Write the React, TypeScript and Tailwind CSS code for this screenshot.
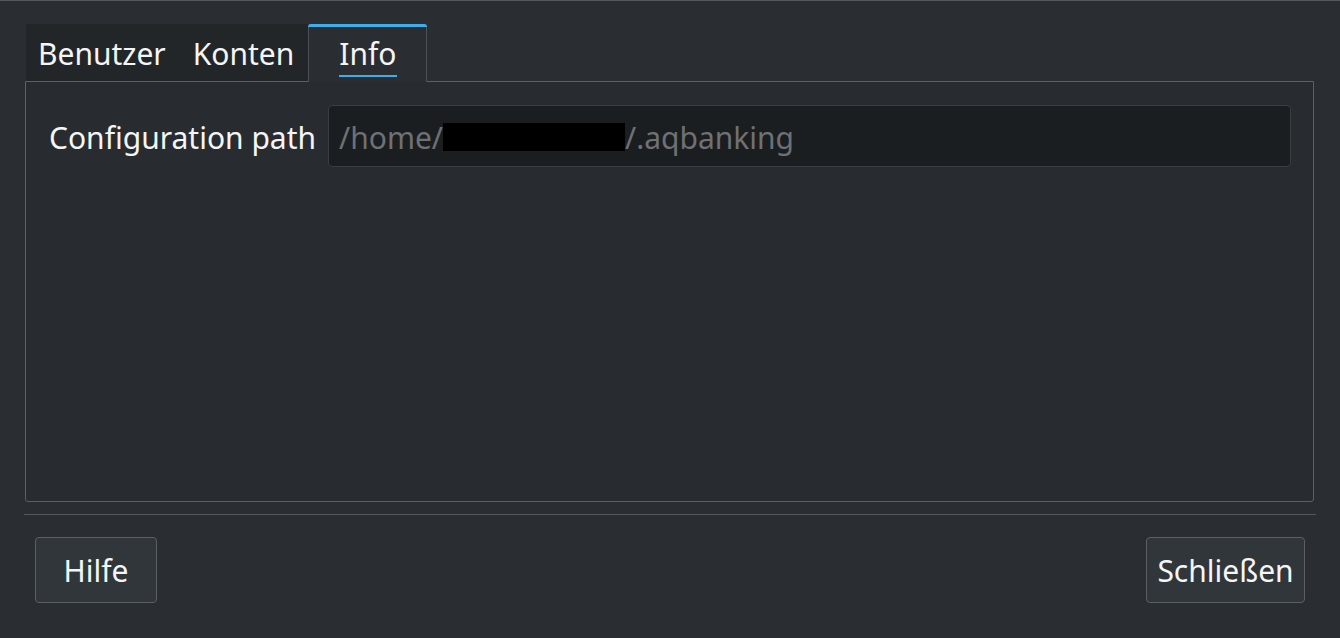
import React from 'react';

const font = { fontFamily: '"Noto Sans", "Open Sans", sans-serif' };

function Tab({ label, active, first }: { label: string; active?: boolean; first?: boolean }) {
  if (active) {
    return (
      <div className="relative -mb-px flex h-[58px] w-[119px] flex-col items-center rounded-t-[3px] border-x border-[#4d5155] bg-[#2a2e32]">
        <div className="h-[3px] w-[calc(100%+2px)] -mx-px rounded-t-[3px] bg-[#3daee9]" />
        <span className="mt-[5px] leading-[44px]">{label}</span>
        <div className="-mt-[1px] h-[2px] w-[58px] bg-[#3daee9]" />
      </div>
    );
  }
  return (
    <div className={`${first ? 'pl-[12px] pr-[14px]' : 'pl-[13px] pr-[14px]'} pt-[8px] leading-[44px]`}>{label}</div>
  );
}

export default function App() {
  return (
    <div
      style={font}
      className="flex h-[638px] w-[1340px] flex-col border-t border-[#54585c] bg-[#2a2e32] text-[30px] text-[#f4f5f6]"
    >
      <div className="flex flex-col pl-[25px] pr-[26px] pt-[23px]">
        <div className="flex">
          <div className="ml-px flex h-[57px] items-start bg-[#232629]">
            <Tab label="Benutzer" first />
            <Tab label="Konten" />
          </div>
          <Tab label="Info" active />
        </div>
        <div className="flex h-[421px] flex-col rounded-b-[3px] border border-[#5c5f63] bg-[#282c30] pl-[23px] pr-[22px] pt-[23px]">
          <div className="flex items-center gap-[12px]">
            <span className="pt-[4px] leading-[40px]">Configuration path</span>
            <div className="flex h-[62px] flex-1 items-center rounded-[4px] border border-[#3a3e42] bg-[#1b1e20] px-[10px] pt-[2px] text-[#6e7175]">
              <span>/home/</span>
              <span className="relative inline-block h-[28px] w-[182px] bg-black">
                <span className="absolute left-[-2px] top-[28px] h-[14px] w-[18px] bg-[#1b1e20]" />
              </span>
              <span>/.aqbanking</span>
            </div>
          </div>
        </div>
      </div>
      <div className="mx-[24px] mt-[12px] h-px bg-[#54585c]" />
      <div className="flex justify-between px-[35px] pt-[22px]">
        <button className="h-[66px] w-[122px] rounded-[4px] border border-[#5c5f63] bg-[#31363b] text-[#f4f5f6]">
          Hilfe
        </button>
        <button className="h-[66px] w-[159px] rounded-[4px] border border-[#5c5f63] bg-[#31363b] text-[#f4f5f6]">
          Schließen
        </button>
      </div>
    </div>
  );
}
